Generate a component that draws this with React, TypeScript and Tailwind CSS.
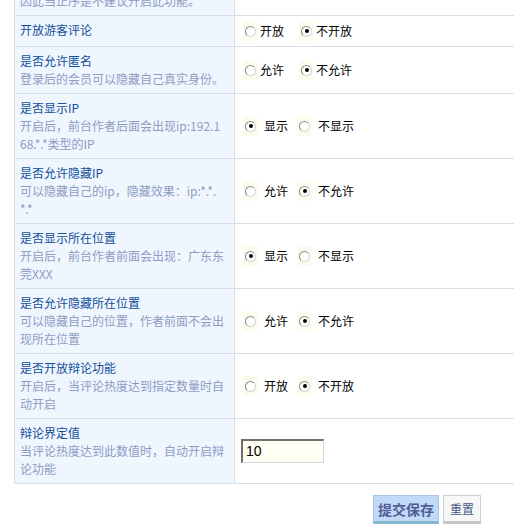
import React from "react";

const FONT = "font-['Noto_Sans_CJK_SC','Noto_Sans',sans-serif]";

function Radio({ checked }: { checked: boolean }) {
  return (
    <span className="inline-flex items-center w-[15px] h-[20px] bg-[#fbfbee] shrink-0">
      <span className="ml-[2px] w-[11px] h-[11px] rounded-full border border-t-[#8a8a8a] border-l-[#8a8a8a] border-r-[#d4d4d4] border-b-[#d4d4d4] bg-white flex items-center justify-center">
        {checked && <span className="w-[4px] h-[4px] rounded-full bg-black" />}
      </span>
    </span>
  );
}

type Opt = { label: string; checked: boolean };

function Options({ opts, spaced }: { opts: Opt[]; spaced?: boolean }) {
  return (
    <div className={`flex items-center ${spaced ? "gap-[9px]" : "gap-[15px]"}`}>
      {opts.map((o) => (
        <span key={o.label} className="flex items-center">
          <Radio checked={o.checked} />
          <span className={`${spaced ? "ml-[6px]" : "ml-[2px]"} text-[12px] leading-[18px] text-black`}>
            {o.label}
          </span>
        </span>
      ))}
    </div>
  );
}

function Row({
  title,
  desc,
  children,
  className = "",
}: {
  title?: string;
  desc?: React.ReactNode;
  children?: React.ReactNode;
  className?: string;
}) {
  return (
    <div className={`flex border-b border-[#d7dfeb] ${className}`}>
      <div className="w-[221px] shrink-0 border-l border-r border-[#d7dfeb] bg-[#f0f6fe] px-[5px] py-[5px] text-[12px] leading-[18px] whitespace-nowrap">
        {title && <div className="text-[#124f9a]">{title}</div>}
        {desc && <div className="text-[#8e9cc4]">{desc}</div>}
      </div>
      <div className="flex-1 flex items-center pl-[8px] py-[5px]">{children}</div>
    </div>
  );
}

export default function App() {
  return (
    <div className={`h-[532px] w-[514px] overflow-hidden bg-white ${FONT}`}>
      <div className="-mt-[13px] ml-[14px] w-[500px]">
        <Row desc="因此当正序是不建议开启此功能。" />
        <Row title="开放游客评论" className="h-[31px]">
          <Options
            opts={[
              { label: "开放", checked: false },
              { label: "不开放", checked: true },
            ]}
          />
        </Row>
        <Row title="是否允许匿名" desc="登录后的会员可以隐藏自己真实身份。">
          <Options
            opts={[
              { label: "允许", checked: false },
              { label: "不允许", checked: true },
            ]}
          />
        </Row>
        <Row
          title="是否显示IP"
          desc={
            <>
              开启后，前台作者后面会出现ip:192.1
              <br />
              68.*.*类型的IP
            </>
          }
        >
          <Options
            spaced
            opts={[
              { label: "显示", checked: true },
              { label: "不显示", checked: false },
            ]}
          />
        </Row>
        <Row
          title="是否允许隐藏IP"
          desc={
            <>
              可以隐藏自己的ip，隐藏效果：ip:*.*.
              <br />
              *.*
            </>
          }
        >
          <Options
            spaced
            opts={[
              { label: "允许", checked: false },
              { label: "不允许", checked: true },
            ]}
          />
        </Row>
        <Row
          title="是否显示所在位置"
          desc={
            <>
              开启后，前台作者前面会出现：广东东
              <br />
              莞XXX
            </>
          }
        >
          <Options
            spaced
            opts={[
              { label: "显示", checked: true },
              { label: "不显示", checked: false },
            ]}
          />
        </Row>
        <Row
          title="是否允许隐藏所在位置"
          desc={
            <>
              可以隐藏自己的位置，作者前面不会出
              <br />
              现所在位置
            </>
          }
        >
          <Options
            spaced
            opts={[
              { label: "允许", checked: false },
              { label: "不允许", checked: true },
            ]}
          />
        </Row>
        <Row
          title="是否开放辩论功能"
          desc={
            <>
              开启后，当评论热度达到指定数量时自
              <br />
              动开启
            </>
          }
        >
          <Options
            spaced
            opts={[
              { label: "开放", checked: false },
              { label: "不开放", checked: true },
            ]}
          />
        </Row>
        <Row
          title="辩论界定值"
          desc={
            <>
              当评论热度达到此数值时，自动开启辩
              <br />
              论功能
            </>
          }
        >
          <div className="-ml-[2px] w-[83px] h-[24px] border-t-2 border-l-2 border-t-[#707070] border-l-[#707070] border-r border-b border-r-[#d8d8d8] border-b-[#d8d8d8] bg-[#fffff4] flex items-center pl-[3px] font-['Liberation_Sans',sans-serif] text-[14px] text-black">
            10
          </div>
        </Row>
      </div>
      <div className="mt-[11px] flex justify-end gap-[4px] pr-[33px]">
        <button className="h-[29px] w-[66px] border border-[#a9c6ea] border-b-[3px] border-b-[#86b6cf] bg-[#c2daf8] text-[14px] font-bold text-[#4f5f96] leading-none">
          提交保存
        </button>
        <button className="h-[29px] w-[38px] border border-[#cfcfcf] border-b-[3px] border-b-[#c6c6c6] bg-[#f7f7f7] text-[12px] text-[#4a5a8c] leading-none">
          重置
        </button>
      </div>
    </div>
  );
}
